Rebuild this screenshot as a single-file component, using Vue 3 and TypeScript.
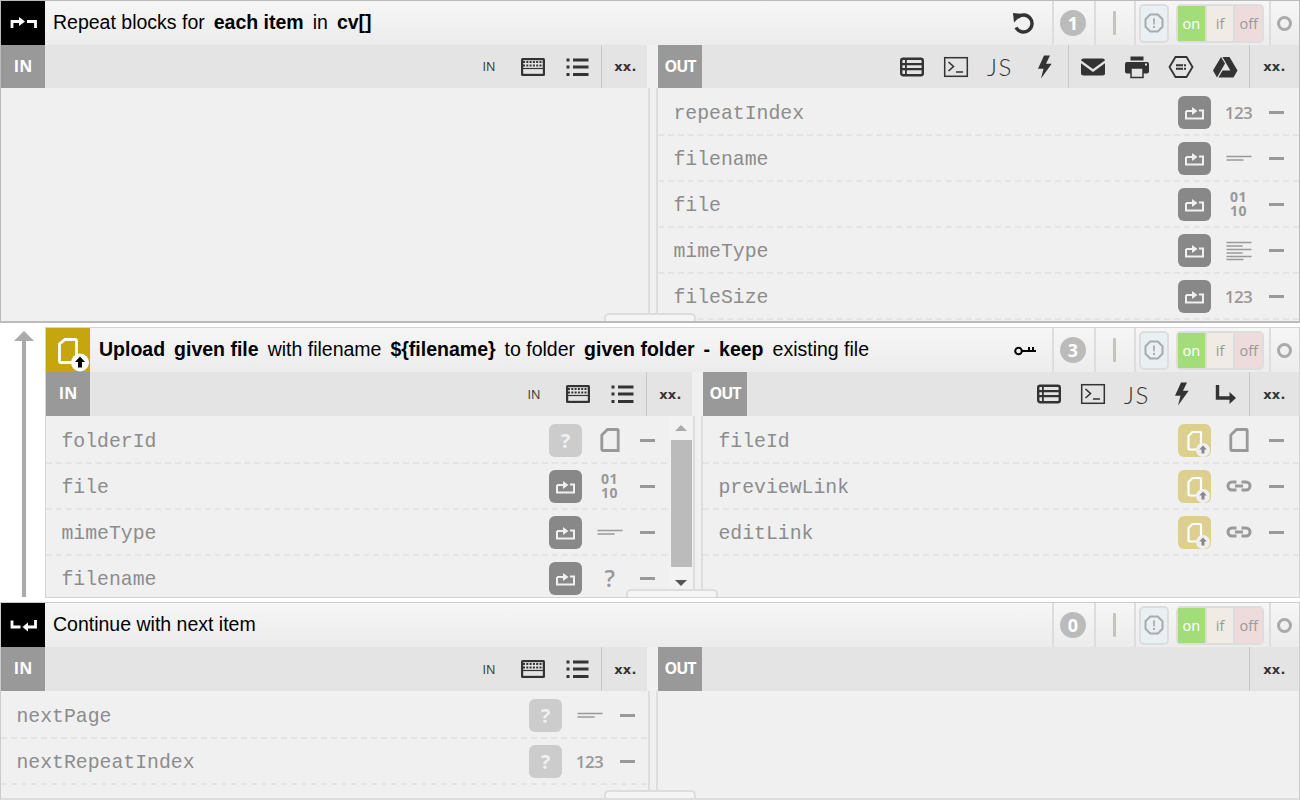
<script setup lang="ts">
type Seg = { t: string; b?: boolean };
type Row = { name: string; box: string; type: string };
type Block = {
  id: string;
  icon: string;
  iconClass: string;
  segs: Seg[];
  action?: string;
  count: string;
  inRows: Row[];
  outRows: Row[];
  outLeft: string[];
  outRight: string[];
  scroll?: boolean;
};

const rep = (name: string, type: string): Row => ({ name, box: 'repeat', type });
const q = (name: string, type: string): Row => ({ name, box: 'q', type });
const up = (name: string, type: string): Row => ({ name, box: 'upload', type });

const blocks: Block[] = [
  {
    id: 'first',
    icon: 'i-start',
    iconClass: 'black',
    segs: [{ t: 'Repeat blocks for' }, { t: 'each item', b: true }, { t: 'in' }, { t: 'cv[]', b: true }],
    action: 'undo',
    count: '1',
    inRows: [],
    outRows: [
      rep('repeatIndex', 'num'),
      rep('filename', 'text'),
      rep('file', 'bin'),
      rep('mimeType', 'para'),
      rep('fileSize', 'num'),
    ],
    outLeft: ['table', 'term', 'js', 'bolt'],
    outRight: ['mail', 'print', 'hex', 'drive'],
  },
  {
    id: 'second',
    icon: 'i-upload',
    iconClass: 'gold',
    segs: [
      { t: 'Upload', b: true },
      { t: 'given file', b: true },
      { t: 'with filename' },
      { t: '${filename}', b: true },
      { t: 'to folder' },
      { t: 'given folder', b: true },
      { t: '-', b: true },
      { t: 'keep', b: true },
      { t: 'existing file' },
    ],
    action: 'key',
    count: '3',
    inRows: [q('folderId', 'file'), rep('file', 'bin'), rep('mimeType', 'text'), rep('filename', 'q')],
    outRows: [up('fileId', 'file'), up('previewLink', 'link'), up('editLink', 'link')],
    outLeft: ['table', 'term', 'js', 'bolt', 'arrow'],
    outRight: [],
    scroll: true,
  },
  {
    id: 'third',
    icon: 'i-end',
    iconClass: 'black',
    segs: [{ t: 'Continue with next item' }],
    count: '0',
    inRows: [q('nextPage', 'text'), q('nextRepeatIndex', 'num')],
    outRows: [],
    outLeft: [],
    outRight: [],
  },
];

function symbolOf(name: string): string {
  return '#i-' + name;
}
</script>

<template>
  <div class="page">
    <svg class="sprite" xmlns="http://www.w3.org/2000/svg">
      <symbol id="i-start" viewBox="0 0 44 44">
        <path d="M11 27v-6.500h8M26 20.500h8.500V27" fill="none" stroke="#fff" stroke-width="2.800" />
        <polygon points="18,16 24,20.500 18,25" fill="#fff" />
      </symbol>
      <symbol id="i-end" viewBox="0 0 44 44">
        <path d="M11 17.500v6.500h8.500M34.500 17v7H26" fill="none" stroke="#fff" stroke-width="2.800" />
        <polygon points="27,19.500 21.500,24 27,28.500" fill="#fff" />
      </symbol>
      <symbol id="i-upload" viewBox="0 0 44 44">
        <path d="M19 11.500h10a1.500 1.500 0 0 1 1.500 1.500v21.500H15a1.500 1.500 0 0 1-1.500-1.500V16z" fill="none" stroke="#fff" stroke-width="2.800" />
        <circle cx="34" cy="34.500" r="9" fill="#fff" />
        <path d="M34 28.500l5 5.500h-3v5.500h-4V34h-3z" fill="currentColor" />
      </symbol>
      <symbol id="i-undo" viewBox="0 0 26 26">
        <path d="M7.500 7.500A8.500 8.500 0 1 1 6 17.500" fill="none" stroke="currentColor" stroke-width="3.400" />
        <polygon points="3,3 12.500,4 4,12.500" fill="currentColor" />
      </symbol>
      <symbol id="i-key" viewBox="0 0 24 12">
        <circle cx="5.500" cy="7" r="3.300" fill="none" stroke="currentColor" stroke-width="2" />
        <path d="M9 6h14v2H9zM15 3h2v3h-2zM19 3h2v3h-2z" fill="currentColor" />
      </symbol>
      <symbol id="i-table" viewBox="0 0 26 24">
        <rect x="2.200" y="3.700" width="21.600" height="16.600" rx="2" fill="none" stroke="currentColor" stroke-width="2.400" />
        <path d="M2 8h22v2.200H2zM2 13h22v2.200H2zM6 4h1.800v16H6z" fill="currentColor" />
      </symbol>
      <symbol id="i-term" viewBox="0 0 26 24">
        <rect x="1.700" y="2.700" width="22.600" height="18.600" fill="none" stroke="currentColor" stroke-width="1.500" />
        <path d="M5.500 7l5 4.500-5 4.500M13 17h7" fill="none" stroke="currentColor" stroke-width="1.600" />
      </symbol>
      <symbol id="i-bolt" viewBox="0 0 26 24">
        <polygon points="13,0.500 7,13.800 12.500,13.800 10,23.500 20.700,8.800 15,8.800 19,0.500" fill="currentColor" />
      </symbol>
      <symbol id="i-mail" viewBox="0 0 26 24">
        <rect x="1" y="3.500" width="24" height="17" rx="2.500" fill="currentColor" />
        <path d="M0.500 6.500L13 15.500 25.500 6.500" fill="none" stroke="#e4e4e4" stroke-width="2.400" />
      </symbol>
      <symbol id="i-print" viewBox="0 0 26 24">
        <path d="M6.500 1.500h13v4h-13z" fill="currentColor" />
        <rect x="1" y="7" width="24" height="11.500" rx="2" fill="currentColor" />
        <rect x="7" y="13" width="12" height="9.500" fill="#e4e4e4" stroke="currentColor" stroke-width="1.500" />
        <rect x="21" y="8.500" width="2" height="2" fill="#e4e4e4" />
      </symbol>
      <symbol id="i-hex" viewBox="0 0 26 24">
        <polygon points="1.500,12 7.500,2 18.500,2 24.500,12 18.500,22 7.500,22" fill="none" stroke="currentColor" stroke-width="1.800" />
        <path d="M8 9.200h10v2H8zM8 12.800h10v2H8z" fill="currentColor" />
        <path d="M15 9.200h1v5.600h-1z" fill="#e4e4e4" />
      </symbol>
      <symbol id="i-drive" viewBox="0 0 26 24">
        <path d="M9 2L1 15.500 5 22.500 13 8.500zM10.500 2h7l8 13.500h-7.200zM6.500 22.500l4-7h15l-4 7z" fill="currentColor" />
      </symbol>
      <symbol id="i-arrow" viewBox="0 0 26 24">
        <path d="M5.500 3V16H19" fill="none" stroke="currentColor" stroke-width="3.400" />
        <polygon points="17.500,10 24,16 17.500,22" fill="currentColor" />
      </symbol>
      <symbol id="i-kbd" viewBox="0 0 26 24">
        <rect x="1" y="3" width="24" height="18" rx="1.500" fill="currentColor" />
        <rect x="3.200" y="5.200" width="19.600" height="13.600" fill="#e4e4e4" />
        <path d="M3 7h20M3 10.500h20" stroke="currentColor" stroke-width="1.800" stroke-dasharray="2 1.300" fill="none" />
        <path d="M3 13.500h20" stroke="currentColor" stroke-width="1.200" fill="none" />
      </symbol>
      <symbol id="i-list" viewBox="0 0 26 24">
        <path d="M2.500 3.500h3v3h-3zM2.500 10.500h3v3h-3zM2.500 18h3v3h-3zM9 3.500h15.500v3H9zM9 10.500h15.500v3H9zM9 18h15.500v3H9z" fill="currentColor" />
      </symbol>
      <symbol id="i-repeat" viewBox="0 0 33 33">
        <path d="M8 15v7.500h17v-8h-4M8 15h7" fill="none" stroke="#f0f0f0" stroke-width="2" />
        <polygon points="14,11 19.500,15 14,19" fill="#f0f0f0" />
      </symbol>
      <symbol id="i-filebox" viewBox="0 0 33 33">
        <path d="M14.500 8h7.500a1 1 0 0 1 1 1v16.500H11.500a1 1 0 0 1-1-1V12z" fill="none" stroke="#fff" stroke-width="2.200" />
        <circle cx="25" cy="26" r="7" fill="#f0f0f0" />
        <path d="M25 21.500l3.800 4h-2.300v4h-3v-4h-2.300z" fill="#888" />
      </symbol>
      <symbol id="i-file" viewBox="0 0 26 24">
        <path d="M10.500 1.500h9.700a1 1 0 0 1 1 1v20H5.800a1 1 0 0 1-1-1V7z" fill="none" stroke="currentColor" stroke-width="2.800" />
      </symbol>
      <symbol id="i-link" viewBox="0 0 26 24">
        <path d="M10.500 8H6a4 4 0 0 0 0 8h4.500M15.500 8H20a4 4 0 0 1 0 8h-4.500M9 12h8" fill="none" stroke="currentColor" stroke-width="3" />
      </symbol>
      <symbol id="i-text" viewBox="0 0 26 24">
        <path d="M0.500 10.500h25M0.500 14h17" fill="none" stroke="currentColor" stroke-width="1.500" />
      </symbol>
      <symbol id="i-para" viewBox="0 0 26 24">
        <path d="M0.500 4.500h25M0.500 8h16M0.500 11.500h25M0.500 15h16M0.500 18.500h25M0.500 21.500h17" fill="none" stroke="currentColor" stroke-width="1.400" />
      </symbol>
      <symbol id="i-stop" viewBox="0 0 20 20">
        <polygon points="6.200,1.500 13.800,1.500 18.500,6.200 18.500,13.800 13.800,18.500 6.200,18.500 1.500,13.800 1.500,6.200" fill="none" stroke="currentColor" stroke-width="2" />
        <path d="M9 5.500h2l-.3 6h-1.400zM9 13h2v2H9z" fill="currentColor" />
      </symbol>
    </svg>

    <div v-for="b in blocks" :key="b.id" class="line" :class="'line-' + b.id">
      <div v-if="b.id === 'second'" class="loop">
        <div class="loop-head"></div>
        <div class="loop-stem"></div>
      </div>
      <section class="block" :class="b.id">
        <header class="head">
          <svg class="head-icon" :class="b.iconClass"><use :href="'#' + b.icon" /></svg>
          <div class="title">
            <span v-for="(s, i) in b.segs" :key="i" :class="{ strong: s.b }">{{ s.t }}</span>
          </div>
          <svg v-if="b.action === 'undo'" class="undo"><use href="#i-undo" /></svg>
          <svg v-if="b.action === 'key'" class="key"><use href="#i-key" /></svg>
          <div class="cell count-cell"><span class="count">{{ b.count }}</span></div>
          <div class="cell pipe-cell"><span class="pipe"></span></div>
          <div class="cell toggles">
            <div class="stop"><svg><use href="#i-stop" /></svg></div>
            <div class="switch">
              <span class="on">on</span>
              <span class="if">if</span>
              <span class="off">off</span>
            </div>
          </div>
          <div class="cell dot-cell"><span class="dot"></span></div>
        </header>

        <div class="panels">
          <div class="panel left">
            <div class="io">
              <div class="tab">IN</div>
              <div class="grow"></div>
              <div class="tool small-in">IN</div>
              <div class="tool"><svg><use href="#i-kbd" /></svg></div>
              <div class="tool"><svg><use href="#i-list" /></svg></div>
              <div class="xx">xx.</div>
            </div>
            <div class="body">
              <div class="rows">
                <div v-for="r in b.inRows" :key="r.name" class="row">
                  <span class="name">{{ r.name }}</span>
                  <span class="box" :class="r.box">
                    <template v-if="r.box === 'q'">?</template>
                    <svg v-else-if="r.box === 'repeat'"><use href="#i-repeat" /></svg>
                    <svg v-else><use href="#i-filebox" /></svg>
                  </span>
                  <span class="type">
                    <template v-if="r.type === 'num'">123</template>
                    <span v-else-if="r.type === 'bin'" class="bin"><span>01</span><span>10</span></span>
                    <span v-else-if="r.type === 'q'" class="qm">?</span>
                    <svg v-else><use :href="symbolOf(r.type)" /></svg>
                  </span>
                  <span class="dash-cell"><span class="dash"></span></span>
                </div>
              </div>
              <div v-if="b.scroll" class="scroll">
                <span class="up"></span>
                <span class="thumb"></span>
                <span class="down"></span>
              </div>
            </div>
          </div>

          <div class="gutter">
            <div class="gutter-top"></div>
            <div class="gutter-lines"></div>
          </div>

          <div class="panel right">
            <div class="io">
              <div class="tab out">OUT</div>
              <div class="grow"></div>
              <div v-for="t in b.outLeft" :key="t" class="tool">
                <span v-if="t === 'js'" class="js">JS</span>
                <svg v-else><use :href="symbolOf(t)" /></svg>
              </div>
              <template v-if="b.outRight.length">
                <div class="tool-sep"></div>
                <div v-for="t in b.outRight" :key="t" class="tool">
                  <svg><use :href="symbolOf(t)" /></svg>
                </div>
              </template>
              <div class="xx wide">xx.</div>
            </div>
            <div class="body">
              <div class="rows">
                <div v-for="r in b.outRows" :key="r.name" class="row">
                  <span class="name">{{ r.name }}</span>
                  <span class="box" :class="r.box">
                    <svg v-if="r.box === 'repeat'"><use href="#i-repeat" /></svg>
                    <svg v-else><use href="#i-filebox" /></svg>
                  </span>
                  <span class="type">
                    <template v-if="r.type === 'num'">123</template>
                    <span v-else-if="r.type === 'bin'" class="bin"><span>01</span><span>10</span></span>
                    <svg v-else><use :href="symbolOf(r.type)" /></svg>
                  </span>
                  <span class="dash-cell"><span class="dash"></span></span>
                </div>
              </div>
            </div>
          </div>
        </div>
        <div class="handle"></div>
      </section>
    </div>
  </div>
</template>

<style scoped>
.page {
  width: 1300px;
  height: 800px;
  overflow: hidden;
  background: #fff;
  font-family: "Liberation Sans", Arial, sans-serif;
}
.sprite {
  display: none;
}
.line {
  display: flex;
}
.line-first {
  height: 323px;
  margin-bottom: 4px;
}
.line-second {
  height: 271px;
  margin-bottom: 4px;
}
.line-third {
  height: 198px;
}
.loop {
  width: 45px;
  flex: none;
  display: flex;
  flex-direction: column;
  align-items: center;
  padding: 4px 0 1px 2px;
  box-sizing: border-box;
}
.loop-head {
  width: 0;
  height: 0;
  border-left: 10px solid transparent;
  border-right: 10px solid transparent;
  border-bottom: 10px solid #aaa;
}
.loop-stem {
  width: 4px;
  flex: 1;
  background: #aaa;
}
.block {
  position: relative;
  flex: 1;
  min-width: 0;
  display: flex;
  flex-direction: column;
  box-sizing: border-box;
  background: #f0f0f0;
  border: 1px solid #d4d4d4;
  overflow: hidden;
}
.block.first {
  border-color: #bbb;
  border-bottom-width: 2px;
}
.block.third {
  border-color: #ccc;
  border-bottom: 2px solid #ddd;
}
.head {
  height: 44px;
  flex: none;
  display: flex;
  align-items: center;
  background: linear-gradient(#f6f6f6, #ececec);
}
.head-icon {
  width: 44px;
  height: 44px;
  flex: none;
}
.head-icon.black {
  background: #000;
  color: #000;
}
.head-icon.gold {
  background: #c6a60f;
  color: #000;
}
.title {
  flex: 1;
  min-width: 0;
  display: flex;
  gap: 9px;
  padding: 0 0 2px 8px;
  font-size: 19.500px;
  color: #000;
  white-space: nowrap;
}
.second .title {
  padding-left: 9px;
}
.strong {
  font-weight: 700;
}
.undo {
  width: 26px;
  height: 26px;
  color: #333;
  margin-right: 16px;
}
.key {
  width: 24px;
  height: 12px;
  color: #000;
  margin-right: 15px;
}
.cell {
  height: 44px;
  flex: none;
  box-sizing: border-box;
  border-left: 2px solid #ddd;
  display: flex;
  align-items: center;
  justify-content: center;
}
.count-cell {
  width: 42px;
  padding-right: 2px;
}
.count {
  width: 26px;
  height: 26px;
  border-radius: 50%;
  background: #bbb;
  color: #fff;
  font-size: 18px;
  font-weight: 700;
  line-height: 26px;
  text-align: center;
  font-family: "Open Sans", sans-serif;
}
.pipe-cell {
  width: 40px;
  padding-right: 2px;
}
.pipe {
  width: 3px;
  height: 24px;
  background: #c4c4bc;
  border-radius: 1px;
}
.toggles {
  width: 135px;
  justify-content: flex-start;
  padding-left: 3px;
  gap: 7px;
}
.stop {
  width: 30px;
  height: 39px;
  box-sizing: border-box;
  border: 2px solid #ddd;
  border-radius: 5px;
  background: #e9f0f4;
  display: flex;
  align-items: center;
  justify-content: center;
  color: #aaa;
}
.stop svg {
  width: 20px;
  height: 20px;
}
.switch {
  width: 88px;
  height: 39px;
  box-sizing: border-box;
  padding: 2px;
  gap: 2px;
  background: #ddd;
  border-radius: 5px;
  display: flex;
  font-family: "Open Sans", sans-serif;
  font-size: 14.500px;
  line-height: 35px;
  text-align: center;
}
.switch span {
  flex: 1;
}
.on {
  background: #a2dd7a;
  color: #fff;
}
.if {
  background: #f0ebe5;
  color: #999;
}
.off {
  background: #eedcdc;
  color: #999;
}
.dot-cell {
  width: 30px;
  padding-right: 2px;
}
.dot {
  width: 15px;
  height: 15px;
  box-sizing: border-box;
  border: 3px solid #aaa;
  border-radius: 50%;
}
.panels {
  flex: 1;
  min-height: 0;
  display: flex;
}
.panel {
  display: flex;
  flex-direction: column;
  min-height: 0;
}
.panel.left {
  width: 646px;
  flex: none;
}
.panel.right {
  flex: 1;
  min-width: 0;
}
.io {
  height: 44px;
  flex: none;
  display: flex;
  align-items: stretch;
  background: #e4e4e4;
}
.first .io {
  height: 43px;
}
.tab {
  width: 44px;
  flex: none;
  background: #999;
  color: #fff;
  font-family: "Open Sans", sans-serif;
  font-weight: 700;
  font-size: 16px;
  display: flex;
  align-items: center;
  justify-content: center;
  padding-bottom: 2px;
  box-sizing: border-box;
}
.tab.out {
  letter-spacing: -1px;
}
.grow {
  flex: 1;
}
.tool {
  width: 44px;
  flex: none;
  display: flex;
  align-items: center;
  justify-content: center;
  color: #333;
}
.tool svg {
  width: 26px;
  height: 24px;
}
.small-in {
  font-family: "Open Sans", sans-serif;
  font-size: 12.500px;
}
.js {
  font-family: Lato, "Open Sans", sans-serif;
  font-size: 24px;
  font-weight: 300;
  color: #333;
  letter-spacing: 1.500px;
}
.tool-sep {
  width: 1px;
  flex: none;
  margin: 0 2px;
  background: #c8c8c8;
}
.xx {
  width: 46px;
  flex: none;
  box-sizing: border-box;
  margin-left: 2px;
  padding-left: 2px;
  border-left: 1px solid #c8c8c8;
  display: flex;
  align-items: center;
  justify-content: center;
  font-family: "DejaVu Sans", sans-serif;
  font-size: 13px;
  font-weight: 700;
  letter-spacing: 0.300px;
  color: #333;
}
.xx.wide {
  width: 50px;
  padding-left: 0;
}
.gutter {
  width: 11px;
  flex: none;
  display: flex;
  flex-direction: column;
  background: #f0f0f0;
}
.gutter-top {
  height: 44px;
  flex: none;
}
.first .gutter-top {
  height: 43px;
}
.gutter-lines {
  flex: 1;
  box-sizing: border-box;
  margin-left: 1px;
  border-left: 2px solid #ddd;
  border-right: 2px solid #ddd;
}
.body {
  flex: 1;
  min-height: 0;
  display: flex;
  overflow: hidden;
  background: #f0f0f0;
}
.rows {
  flex: 1;
  min-width: 0;
  padding-top: 2px;
}
.row {
  height: 46px;
  box-sizing: border-box;
  display: flex;
  align-items: center;
  padding: 0 12px 0 15px;
  border-bottom: 2px dashed #e4e4e4;
}
.left .row {
  padding-right: 9px;
}
.name {
  flex: 1;
  min-width: 0;
  padding: 4px 0 0 0.500px;
  font-family: "Liberation Mono", "Courier New", monospace;
  font-size: 19.800px;
  color: #8c8c8c;
}
.box {
  width: 33px;
  height: 33px;
  flex: none;
  border-radius: 6px;
  display: flex;
  align-items: center;
  justify-content: center;
  overflow: hidden;
}
.box svg {
  width: 33px;
  height: 33px;
}
.box.repeat {
  background: #888;
}
.box.q {
  background: #ccc;
  color: #f0f0f0;
  font-family: "Open Sans", sans-serif;
  font-weight: 700;
  font-size: 20px;
}
.box.upload {
  background: #ddd08f;
}
.type {
  width: 55px;
  flex: none;
  display: flex;
  align-items: center;
  justify-content: center;
  color: #999;
  font-family: "Open Sans", sans-serif;
  font-size: 17px;
  font-weight: 600;
  letter-spacing: -0.500px;
}
.type svg {
  width: 26px;
  height: 24px;
}
.bin {
  display: flex;
  flex-direction: column;
  align-items: center;
  font-size: 14px;
  font-weight: 700;
  line-height: 14px;
  letter-spacing: 0.500px;
}
.qm {
  font-size: 23px;
  line-height: 24px;
}
.dash-cell {
  width: 21px;
  flex: none;
  display: flex;
  justify-content: center;
}
.dash {
  width: 15px;
  height: 3px;
  background: #999;
}
.scroll {
  width: 22px;
  flex: none;
  margin-left: 3px;
  display: flex;
  flex-direction: column;
  align-items: center;
  background: #f2f2f2;
}
.up {
  width: 0;
  height: 0;
  margin: 9px 0 9px;
  border-left: 6px solid transparent;
  border-right: 6px solid transparent;
  border-bottom: 6px solid #aaa;
}
.thumb {
  width: 21px;
  height: 127px;
  background: #bbb;
}
.down {
  width: 0;
  height: 0;
  margin-top: 13px;
  border-left: 6px solid transparent;
  border-right: 6px solid transparent;
  border-top: 6px solid #555;
}
.handle {
  position: absolute;
  left: 603px;
  bottom: 0;
  width: 92px;
  height: 8px;
  box-sizing: border-box;
  background: #f5f5f5;
  border: 2px solid #ddd;
  border-bottom: 0;
  border-radius: 5px 5px 0 0;
}
.second .handle {
  left: 580px;
}
</style>

<style>
html,
body {
  margin: 0;
  overflow: hidden;
}
</style>
